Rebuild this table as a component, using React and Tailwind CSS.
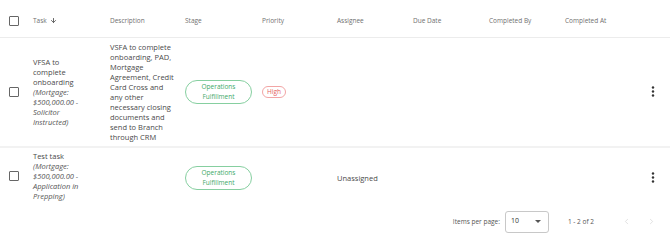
import { ArrowDown, ChevronLeft, ChevronRight } from 'lucide-react';

const columns = ['Description', 'Stage', 'Priority', 'Assignee', 'Due Date', 'Completed By', 'Completed At'];

const tasks = [{
  id: 1,
  title: 'VFSA to complete onboarding',
  meta: '(Mortgage: $500,000.00 - Solicitor Instructed)',
  description: 'VSFA to complete onboarding, PAD, Mortgage Agreement, Credit Card Cross and any other necessary closing documents and send to Branch through CRM',
  priority: 'High',
  assignee: '',
  pad: 'py-[4px]'
}, {
  id: 2,
  title: 'Test task',
  meta: '(Mortgage: $500,000.00 - Application in Prepping)',
  description: '',
  priority: '',
  assignee: 'Unassigned',
  pad: 'pt-[3px] pb-[7px]'
}];

const Checkbox = () => <div className="w-[10px] h-[10px] border-[1.5px] border-[#666] rounded-[1px] bg-white" />;

const Dots = () => <svg width="4" height="11" viewBox="0 0 4 11">
    <circle cx="2" cy="1.5" r="1.2" fill="#333" />
    <circle cx="2" cy="5.5" r="1.2" fill="#333" />
    <circle cx="2" cy="9.5" r="1.2" fill="#333" />
  </svg>;

export default function App() {
  return <div className="w-[670px] h-[240px] bg-white overflow-hidden" style={{ fontFamily: '"Open Sans", sans-serif' }}>
      <table className="w-[670px] table-fixed border-collapse mt-[5px]">
        <colgroup>
          <col className="w-[33px]" />
          <col className="w-[77px]" />
          <col className="w-[75px]" />
          <col className="w-[77px]" />
          <col className="w-[75px]" />
          <col className="w-[76px]" />
          <col className="w-[76px]" />
          <col className="w-[76px]" />
          <col className="w-[75px]" />
          <col className="w-[30px]" />
        </colgroup>
        <thead>
          <tr className="h-[32px] border-b border-[#ececec] text-[6.5px] text-[#707070] text-left">
            <th className="pl-[9px] font-normal"><Checkbox /></th>
            <th className="font-normal">
              <span className="inline-flex items-center gap-[3px]">
                Task <ArrowDown size={7} strokeWidth={3} className="text-[#555]" />
              </span>
            </th>
            {columns.map(c => <th key={c} className="font-normal">{c}</th>)}
            <th />
          </tr>
        </thead>
        <tbody className="text-[7.5px] leading-[10px] text-[#4a4a4a]">
          {tasks.map((t, i) => <tr key={t.id} className={i === 0 ? 'border-b-2 border-[#f2f2f2]' : ''}>
              <td className={`pl-[9px] align-middle ${t.pad}`}><Checkbox /></td>
              <td className={`pr-[21px] align-middle ${t.pad}`}>
                {t.title} <em className="text-[#555]">{t.meta}</em>
              </td>
              <td className={`pr-[9px] align-middle ${t.pad}`}>{t.description}</td>
              <td className="align-middle">
                <div className="w-[67px] py-[1px] rounded-full border border-[#86cfa0] text-[#3ea868] text-[6.5px] leading-[10px] text-center">
                  Operations<br />Fulfillment
                </div>
              </td>
              <td className="align-middle">
                {t.priority && <span className="inline-block w-[24px] h-[12px] leading-[10px] rounded-full border border-[#f2a5a5] text-[#e35d5d] text-[6.5px] text-center">{t.priority}</span>}
              </td>
              <td className="align-middle">{t.assignee}</td>
              <td />
              <td />
              <td />
              <td className="pl-[11px] align-middle"><Dots /></td>
            </tr>)}
        </tbody>
      </table>
      <div className="h-[28px] flex items-center justify-end pr-[14px] text-[6.5px] text-[#555]">
        <span>Items per page:</span>
        <div className="ml-[5px] w-[44px] h-[22px] border border-[#c8c8c8] rounded-[3px] flex items-center justify-between pl-[5px] pr-[7px] text-[7px] text-[#333]">
          <span>10</span>
          <svg width="6" height="3" viewBox="0 0 6 3"><path d="M0 0h6L3 3z" fill="#555" /></svg>
        </div>
        <span className="ml-[19px]">1 - 2 of 2</span>
        <ChevronLeft size={9} strokeWidth={1.5} className="ml-[28px] text-[#ccc]" />
        <ChevronRight size={9} strokeWidth={1.5} className="ml-[16px] text-[#ccc]" />
      </div>
    </div>;
}
